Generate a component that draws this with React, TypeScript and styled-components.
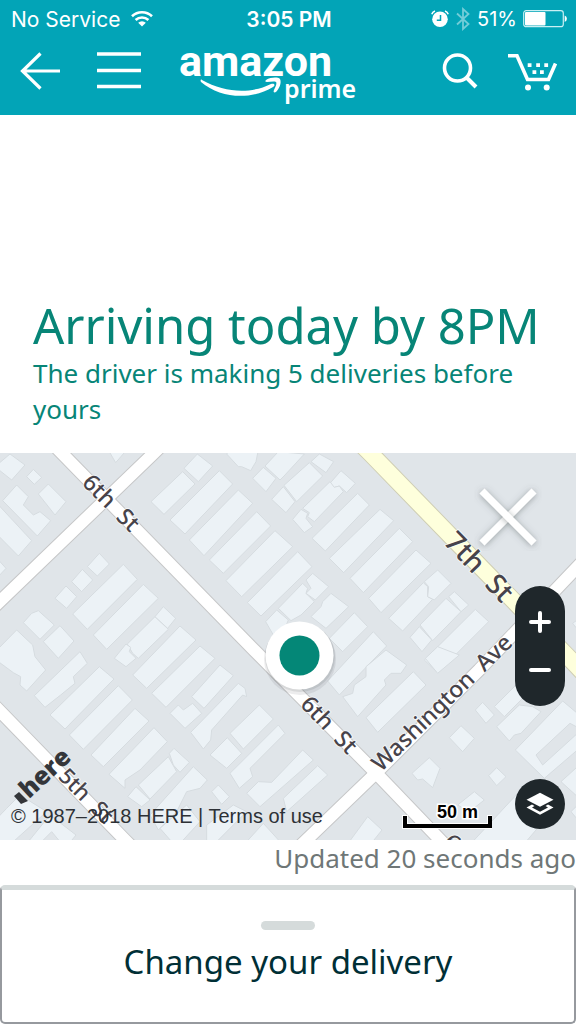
import React from 'react';
import styled, { createGlobalStyle } from 'styled-components';

const ember = '"Noto Sans", "Open Sans", sans-serif';

const GlobalStyle = createGlobalStyle`
  *, *::before, *::after { box-sizing: border-box; }
  body { margin: 0; background: #fff; font-family: ${ember}; }
  button { border: 0; padding: 0; background: none; font: inherit; color: inherit; cursor: pointer; }
  svg { display: block; }
`;

const Page = styled.div`
  display: flex;
  flex-direction: column;
  min-height: 100vh;
`;

const Header = styled.header`
  height: 115px;
  background: #02a4b7;
  color: #fff;
`;

const StatusBar = styled.div`
  display: grid;
  grid-template-columns: 1fr auto 1fr;
  align-items: center;
  height: 38px;
  padding: 0 9px 0 11px;
  font-family: Inter, "Liberation Sans", sans-serif;
  font-size: 20px;
`;

const StatusGroup = styled.div<{ $end?: boolean }>`
  display: flex;
  align-items: center;
  justify-content: ${(p) => (p.$end ? 'flex-end' : 'flex-start')};
  gap: ${(p) => (p.$end ? '6px' : '11px')};
`;

const Carrier = styled.span`
  font-size: 21px;
`;

const Clock = styled.time`
  font-size: 21px;
  font-weight: 600;
`;

const NavBar = styled.nav`
  display: flex;
  align-items: center;
  height: 66px;
  padding: 0 18px 0 20px;
`;

const NavButton = styled.button<{ $gap: number }>`
  flex: none;
  margin-right: ${(p) => p.$gap}px;
`;

const LogoLink = styled.a`
  flex: none;
  margin-right: auto;
`;

const Summary = styled.section`
  padding: 183px 33px 26px;
  color: #078577;
`;

const Title = styled.h1`
  margin: 0 0 3px;
  font-size: 49px;
  line-height: 54px;
  font-weight: 400;
`;

const Detail = styled.p`
  margin: 0;
  font-size: 26px;
  line-height: 36px;
`;

const MapPanel = styled.section`
  position: relative;
  width: 100%;
  aspect-ratio: 576 / 387;
  overflow: hidden;
  background: #e0e5e9;
`;

const MapDrawing = styled.svg`
  width: 100%;
  height: 100%;
`;

const CloseButton = styled.button`
  position: absolute;
  top: 30px;
  right: 34px;
`;

const ZoomControl = styled.div`
  position: absolute;
  top: 133px;
  right: 11px;
  display: flex;
  flex-direction: column;
  justify-content: center;
  width: 50px;
  height: 120px;
  border-radius: 25px;
  background: #1f272b;
`;

const ZoomButton = styled.button`
  display: grid;
  place-items: center;
  height: 48px;
`;

const LayersButton = styled.button`
  position: absolute;
  right: 11px;
  bottom: 11px;
  display: grid;
  place-items: center;
  width: 50px;
  height: 50px;
  border-radius: 50%;
  background: #1f272b;
`;

const Attribution = styled.div`
  position: absolute;
  left: 11px;
  bottom: 12px;
  font-family: "Liberation Sans", Arial, sans-serif;
  font-size: 20px;
  line-height: 24px;
  color: #2d3136;
  a { color: inherit; text-decoration: none; }
`;

const ScaleBar = styled.div`
  position: absolute;
  right: 84px;
  bottom: 10px;
`;

const Updated = styled.p`
  margin: 0;
  text-align: right;
  font-size: 26px;
  line-height: 36px;
  color: #6f7777;
`;

const Sheet = styled.button`
  display: flex;
  flex: 1;
  flex-direction: column;
  align-items: center;
  gap: 8px;
  width: 100%;
  margin-top: 9px;
  padding: 31px 0;
  border-style: solid;
  border-width: 5px 2px 2px;
  border-color: #d5dbdb #96999e #96999e;
  border-radius: 5px;
  background: #fff;
  color: #002f36;
  font-size: 33px;
  line-height: 48px;
`;

const Handle = styled.span`
  flex: none;
  width: 54px;
  height: 9px;
  border-radius: 5px;
  background: #d5dbdb;
`;

interface Survey { x: number; y: number; blocks: string[] }

/* Building outlines, drawn at three units to the map unit. */
const surveys: Survey[] = [
  {
    x: 0, y: 450, blocks: [
      '-9,45 30,12 75,45 35,90 -9,55',
      '80,80 100,58 125,82 103,103',
      '8,152 50,105 85,140 70,165 100,195 120,185 152,212 112,258',
      '115,132 145,102 198,155 165,195',
      '-9,160 95,272 55,318 -9,253',
      '-9,325 18,355 -9,384',
      '325,0 380,0 347,38',
      '453,155 548,65 585,102 492,193',
      '552,55 592,12 638,48 595,95',
      '510,210 658,62 698,102 555,252',
      '568,270 715,120 758,160 612,317',
      '628,330 770,185 812,228 670,370',
      '678,392 825,242 878,290 725,440',
      '742,458 893,305 936,350 783,498',
      '680,12 690,0 775,0 768,35 752,62 725,50 715,50',
      '758,85 790,52 828,85 798,125',
      '795,48 835,5 913,12 855,75 840,90',
      '815,148 850,110 885,155 858,188',
      '852,106 928,38 968,78 890,155',
      '797,515 830,480 865,510 845,560 820,555',
      '835,475 908,400 923,415 918,430 943,455 903,495 873,512',
      '262,350 298,310 328,342 292,378',
      '215,395 247,358 278,390 245,425',
      '165,445 198,408 230,440 200,475',
      '218,492 370,343 412,388 262,538',
      '280,555 430,403 475,445 320,598',
      '382,582 465,500 505,538 415,625 398,610',
      '465,500 490,470 527,505 503,535',
      '343,625 378,582 392,592 388,605 408,625 378,650',
      '70,518 95,490 115,482 163,525 120,568',
      '130,575 180,527 222,573 175,625',
      '-9,600 50,540 98,585 105,620 137,660 80,723 60,705 62,680 40,668 -9,632',
      '398,675 540,528 588,570 440,715',
    ],
  },
  {
    x: 286, y: 450, blocks: [
      '75,35 100,12 143,35 120,68',
      '132,100 165,62 208,100 182,128 160,108 145,112',
      '50,175 132,95 145,112 160,108 172,125 85,215 65,200 70,188',
      '20,208 45,178 65,190 60,205 80,230 55,248',
      '78,265 215,130 250,165 118,303',
      '130,325 282,178 323,212 173,368',
      '192,385 340,235 380,275 232,428',
      '248,445 390,300 435,340 285,488',
      '308,505 412,398 425,410 425,440 440,448 350,543',
      '415,395 455,360 495,400 445,450 425,440 428,410',
      '372,562 400,530 437,570 408,605',
      '402,525 480,445 525,485 440,572',
      '488,440 505,425 548,465 525,485',
      '415,630 568,478 608,515 455,668',
      '60,390 80,370 128,410 88,450 60,430 75,415',
      '75,500 105,470 110,455 135,430 188,470 120,535',
      '130,565 205,488 245,530 170,605',
      '125,693 262,545 302,588 160,735',
      '860,520 880,505 880,545',
    ],
  },
  {
    x: 0, y: 645, blocks: [
      '103,152 240,20 262,55 220,95 225,115 182,150 135,187',
      '150,210 298,65 342,102 195,252',
      '208,270 355,122 397,165 250,313',
      '273,330 405,190 447,228 310,365',
      '327,388 462,248 502,290 420,375 375,405 375,430',
      '383,455 408,425 450,465 425,485',
      '415,420 505,335 530,380 450,462',
      '508,325 522,310 568,352 540,382 520,360',
      '455,145 600,3 645,40 498,187',
      '510,205 535,180 550,195 578,175 605,205 555,250',
      '575,155 660,60 700,92 612,190',
      '572,262 715,115 735,130 740,155 728,150 635,255 632,285 610,312',
      '630,330 682,278 725,325 680,370',
      '690,265 778,180 820,222 730,312',
      '690,385 835,240 855,265 750,370 758,395 718,430',
      '740,445 775,410 815,412 908,315 940,345 780,485',
      '635,440 655,420 688,455 665,478',
      '450,510 580,365 622,405 600,430 560,440 530,500 475,555',
      '-9,520 20,490 60,450 140,500 40,590 -9,590',
      '85,590 150,510 228,570 212,590 180,590 155,560 125,590',
      '480,550 560,480 600,530 545,590 515,590',
      '620,540 700,480 740,500 650,590 620,590',
      '740,590 790,535 840,590',
      '850,460 953,362 983,390 860,500',
    ],
  },
  {
    x: 286, y: 645, blocks: [
      '170,155 200,145 205,120 240,95 240,65 300,15 362,60 345,85 315,85 295,105 300,120 215,215',
      '240,218 382,80 420,120 275,262',
      '418,40 455,5 520,30 455,85',
      '490,278 525,242 565,280 530,320',
      '568,195 590,172 625,210 600,235',
      '625,185 690,120 720,150 655,215',
      '632,245 700,180 740,185 765,200 705,265 685,270 670,288',
      '688,315 830,168 880,210 880,250 852,235 750,330 770,360 880,260 880,310 775,400',
      '378,385 430,338 462,370 440,428 410,402 395,405',
      '608,392 632,368 660,395 632,422',
      '515,480 565,440 595,465 550,500',
      '560,590 700,440 780,520 720,590',
      '825,410 880,360 880,460',
      '855,500 880,475 880,530',
      '190,590 245,515 288,555 260,590',
    ],
  },
];

const roads = [
  'M-6 607 L153 454 L167 440',
  'M48 439 L254 650 L376 773 L446 846',
  'M296 850 L376 773 L479 670 L584 560',
  'M-6 705 L125 840 L135 850',
];

interface Label { text: string; x: number; y: number; turn: number; size: number }

const labels: Label[] = [
  { text: '6th  St', x: 111, y: 503, turn: 45, size: 23 },
  { text: '7th  St', x: 479, y: 567, turn: 46, size: 28 },
  { text: '6th  St', x: 329, y: 725, turn: 46, size: 23 },
  { text: '5th  St', x: 86, y: 796, turn: 45, size: 22 },
  { text: 'Washington  Ave', x: 442, y: 703, turn: -44, size: 23 },
  { text: '6th', x: 460, y: 850, turn: 45, size: 22 },
];

function StreetMap() {
  return (
    <MapDrawing viewBox="0 453 576 387" preserveAspectRatio="xMidYMid slice" role="img" aria-label="Map of the driver near 6th St">
      <rect y="453" width="576" height="387" fill="#e0e5e9" />
      <g fill="#ecf2f6" stroke="#d6dce0" strokeWidth="3" strokeLinejoin="round">
        {surveys.map((s) => (
          <g key={`${s.x}-${s.y}`} transform={`translate(${s.x} ${s.y}) scale(0.33333)`}>
            {s.blocks.map((b) => <polygon key={b} points={b} />)}
          </g>
        ))}
      </g>
      <g fill="none">
        {roads.map((d) => <path key={d} d={d} stroke="#c6c7c8" strokeWidth="14" />)}
        <path d="M357 440 L371 454 L573 662 L590 680" stroke="#cfceb4" strokeWidth="18" />
        {roads.map((d) => <path key={d} d={d} stroke="#fff" strokeWidth="12" />)}
        <path d="M357 440 L371 454 L573 662 L590 680" stroke="#feffdc" strokeWidth="16" />
      </g>
      <g fontFamily='"Noto Sans", sans-serif' fontWeight="500" fill="#47434a" stroke="#fff" strokeOpacity="0.6" strokeWidth="2" paintOrder="stroke" textAnchor="middle">
        {labels.map((l) => (
          <text key={`${l.text}${l.x}`} transform={`translate(${l.x} ${l.y}) rotate(${l.turn})`} y={l.size / 3} fontSize={l.size} style={{ whiteSpace: 'pre' }}>{l.text}</text>
        ))}
      </g>
      <g fill="#34363a">
        <text transform="translate(46 774) rotate(-43)" y="7" fontFamily='"Open Sans", "Noto Sans", sans-serif' fontWeight="800" fontSize="25" textAnchor="middle">here</text>
        <path d="M14 796 L19 792 L28 801 L21 804 Z" />
      </g>
      <circle cx="300" cy="659" r="36" fill="#40464a" opacity="0.1" />
      <circle cx="300" cy="657" r="35" fill="#40464a" opacity="0.12" />
      <circle cx="299.500" cy="655.500" r="34" fill="#fff" />
      <circle cx="299.500" cy="655.500" r="20" fill="#048777" />
    </MapDrawing>
  );
}

const WifiIcon = () => (
  <svg width="22" height="18" viewBox="0 0 22 18" fill="none" stroke="#fff" strokeWidth="2.600" aria-label="Wi-Fi">
    <path d="M1 6.200 A14.500 14.500 0 0 1 21 6.200" />
    <path d="M4.600 10 A9.400 9.400 0 0 1 17.400 10" />
    <path d="M11 16.500 L7.200 12.700 A5.400 5.400 0 0 1 14.800 12.700 Z" fill="#fff" stroke="none" />
  </svg>
);

const AlarmIcon = () => (
  <svg width="18" height="18" viewBox="0 0 18 18" aria-label="Alarm">
    <circle cx="9" cy="9.300" r="7.800" fill="#fff" />
    <path d="M.8 4.300 A5 5 0 0 1 4 1 M17.200 4.300 A5 5 0 0 0 14 1" stroke="#fff" strokeWidth="1.600" fill="none" />
    <path d="M9.500 5 V10.300 H5.800" stroke="#02a4b7" strokeWidth="1.500" fill="none" />
  </svg>
);

const BluetoothIcon = () => (
  <svg width="16" height="24" viewBox="0 0 16 24" fill="none" stroke="#73cdd8" strokeWidth="1.800" aria-label="Bluetooth">
    <path d="M2 6.500 L13.500 17 L8 22 V2 L13.500 7 L2 17.500" />
  </svg>
);

const BatteryIcon = () => (
  <svg width="44" height="18" viewBox="0 0 44 18" aria-label="Battery">
    <rect x=".7" y=".7" width="39.600" height="16" rx="2.500" fill="none" stroke="#c9f0f4" strokeWidth="1.200" />
    <rect x="2" y="2" width="20.500" height="13.500" rx="1" fill="#fff" />
    <path d="M41.700 5.500 A3.500 3.500 0 0 1 41.700 12 Z" fill="#fff" />
  </svg>
);

const AmazonLogo = () => (
  <svg width="184" height="66" viewBox="0 -2 184 66" fill="#fff" overflow="visible" aria-hidden="true">
    <text x="0" y="36" fontFamily='Roboto, "Liberation Sans", sans-serif' fontWeight="700" fontSize="43">amazon</text>
    <text x="105" y="58" fontFamily='"Noto Sans", sans-serif' fontWeight="600" fontSize="25">prime</text>
    <path d="M23 40 C46 53 72 54 92 44 C95 43 97 45 94 47 C73 60 42 59 22 42 C21 40 22 39 23 40 Z" />
    <path d="M87 40 C92 37 99 37 101 39 C103 43 100 49 97 52 C95 53 94 52 95 50 C97 46 98 43 97 42 C95 41 91 42 88 42 C86 42 86 41 87 40 Z" />
  </svg>
);

const CartIcon = () => (
  <svg width="50" height="40" viewBox="0 0 50 40" fill="none" stroke="#fff" strokeWidth="3.600" aria-hidden="true">
    <path d="M0 4.700 H9 L19.500 28.500 H40.500 L47.500 12.500" />
    <g fill="#fff" stroke="none">
      <circle cx="20" cy="36.500" r="3" /><circle cx="38.700" cy="36.500" r="3" />
      <path d="M19.700 12.300h3.800v3.800h-3.800z M28.200 12.300h3.800v3.800h-3.800z M36.300 12.300h3.800v3.800h-3.800z M24.500 19.300h3.800v3.800h-3.800z M32 19.300h3.800v3.800h-3.800z" />
    </g>
  </svg>
);

export default function App() {
  return (
    <Page>
      <GlobalStyle />
      <Header>
        <StatusBar>
          <StatusGroup><Carrier>No Service</Carrier><WifiIcon /></StatusGroup>
          <Clock>3:05 PM</Clock>
          <StatusGroup $end><AlarmIcon /><BluetoothIcon /><span>51%</span><BatteryIcon /></StatusGroup>
        </StatusBar>
        <NavBar>
          <NavButton $gap={36} aria-label="Back">
            <svg width="40" height="40" viewBox="0 0 40 40" fill="none" stroke="#fff" strokeWidth="3.200">
              <path d="M20.500 2.500 L2.500 20 L20.500 37.500 M2.500 20 H40" />
            </svg>
          </NavButton>
          <NavButton $gap={38} aria-label="Menu">
            <svg width="45" height="40" viewBox="0 0 45 40" stroke="#fff" strokeWidth="3.600">
              <path d="M1 3 H45 M1 19.500 H45 M1 35.500 H45" />
            </svg>
          </NavButton>
          <LogoLink href="#home" aria-label="Amazon Prime"><AmazonLogo /></LogoLink>
          <NavButton $gap={30} aria-label="Search">
            <svg width="36" height="38" viewBox="0 0 36 38" fill="none" stroke="#fff" strokeWidth="3.600">
              <circle cx="15.500" cy="16" r="13" />
              <path d="M24.500 25.500 L34 35" strokeWidth="4" />
            </svg>
          </NavButton>
          <NavButton $gap={0} aria-label="Cart"><CartIcon /></NavButton>
        </NavBar>
      </Header>

      <Summary>
        <Title>Arriving today by 8PM</Title>
        <Detail>The driver is making 5 deliveries before yours</Detail>
      </Summary>

      <MapPanel>
        <StreetMap />
        <CloseButton aria-label="Close map">
          <svg width="68" height="68" viewBox="0 0 68 68" strokeWidth="7" fill="none">
            <defs>
              <filter id="soft" x="-30%" y="-30%" width="160%" height="160%">
                <feDropShadow dx="0" dy="1" stdDeviation="3" floodColor="#555b60" floodOpacity="0.5" />
              </filter>
            </defs>
            <path d="M60 8 L8 60" stroke="#fff" filter="url(#soft)" />
            <path d="M8 8 L60 60" stroke="#fff" filter="url(#soft)" />
          </svg>
        </CloseButton>
        <ZoomControl>
          <ZoomButton aria-label="Zoom in">
            <svg width="24" height="24" viewBox="0 0 24 24" stroke="#fff" strokeWidth="4" strokeLinecap="round"><path d="M3 12 H21 M12 3 V21" /></svg>
          </ZoomButton>
          <ZoomButton aria-label="Zoom out">
            <svg width="24" height="24" viewBox="0 0 24 24" stroke="#fff" strokeWidth="4" strokeLinecap="round"><path d="M3 12 H21" /></svg>
          </ZoomButton>
        </ZoomControl>
        <LayersButton aria-label="Map layers">
          <svg width="28" height="24" viewBox="0 0 28 24" fill="#fff">
            <path d="M14 .8 L27.500 7.800 L14 14.800 L.5 7.800 Z" />
            <path d="M6 12.500 L.5 15.500 L14 22.800 L27.500 15.500 L22 12.500 L19.500 14 L22 15.500 L14 19.800 L6 15.500 L8.500 14 Z" />
          </svg>
        </LayersButton>
        <Attribution>© 1987–2018 HERE | <a href="#terms">Terms of use</a></Attribution>
        <ScaleBar>
          <svg width="90" height="34" viewBox="0 0 90 34" aria-label="Scale: 50 m">
            <path d="M3 19 V30 H88 V19" fill="none" stroke="#fff" strokeWidth="6" />
            <path d="M3 20 V30 H88 V20" fill="none" stroke="#000" strokeWidth="4" />
            <text x="35" y="22" fontFamily='"Liberation Sans", Arial, sans-serif' fontWeight="700" fontSize="18" fill="#000" stroke="#fff" strokeWidth="3" paintOrder="stroke">50 m</text>
          </svg>
        </ScaleBar>
      </MapPanel>

      <Updated>Updated 20 seconds ago</Updated>
      <Sheet>
        <Handle />
        <span>Change your delivery</span>
      </Sheet>
    </Page>
  );
}
